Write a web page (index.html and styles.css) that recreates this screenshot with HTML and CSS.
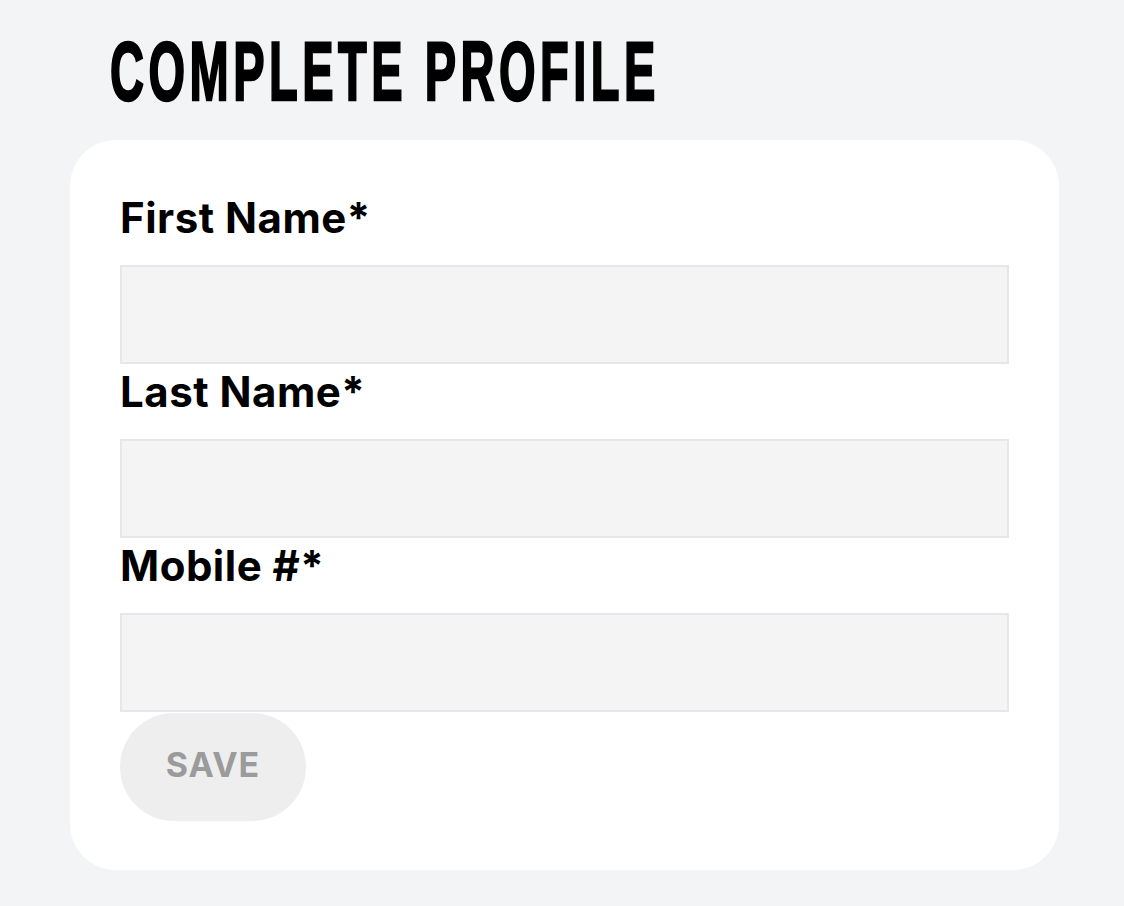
FILE: index.html
```html
<!DOCTYPE html>
<html lang="en">
<head>
    <meta charset="UTF-8">
    <title>Complete Profile</title>
    <link rel="stylesheet" href="styles.css">
</head>
<body>

    <div class="page">
        <!-- 标题 -->
        <h1 class="page-title">COMPLETE PROFILE</h1>

        <!-- 资料表单 -->
        <form class="profile-card" onsubmit="return false">
            <label class="field-label" for="first_name">First Name*</label>
            <input class="field-input" type="text" id="first_name" name="first_name">

            <label class="field-label" for="last_name">Last Name*</label>
            <input class="field-input" type="text" id="last_name" name="last_name">

            <label class="field-label" for="mobile">Mobile #*</label>
            <input class="field-input" type="tel" id="mobile" name="mobile">

            <button class="save-btn" type="submit" disabled>SAVE</button>
        </form>
    </div>

</body>
</html>
```

FILE: styles.css
```css
body {
    margin: 0;
    padding: 0;
    background-color: #f3f4f6;
    font-family: Inter, "Liberation Sans", sans-serif;
    color: #000;
}

.page {
    width: 989px;
    margin-left: 70px;
    padding-top: 29px;
}

.page-title {
    margin: 0 0 27px 40px;
    font-family: "Liberation Sans", sans-serif;
    font-size: 84px;
    line-height: 84px;
    font-weight: 700;
    letter-spacing: 8px;
    -webkit-text-stroke: 2.5px #000;
    transform: scaleX(0.56);
    transform-origin: left center;
    white-space: nowrap;
}

.profile-card {
    display: flex;
    flex-direction: column;
    align-items: flex-start;
    background-color: #ffffff;
    border-radius: 46px;
    padding: 53px 50px 49px;
}

.field-label {
    font-size: 42px;
    line-height: 50px;
    font-weight: 700;
    letter-spacing: 0.5px;
    margin: 3px 0 22px;
}

.field-label:first-child {
    margin-top: 0;
}

.field-input {
    box-sizing: border-box;
    width: 100%;
    height: 99px;
    margin: 0;
    border: 2px solid #e7e7eb;
    background-color: #f4f4f4;
    border-radius: 0;
    outline: none;
}

.save-btn {
    margin-top: 1px;
    width: 186px;
    height: 108px;
    padding-bottom: 6px;
    border: none;
    border-radius: 54px;
    background-color: #eeeeee;
    color: #9b9b9b;
    font-family: Inter, "Liberation Sans", sans-serif;
    font-size: 34px;
    font-weight: 700;
    letter-spacing: 1px;
}
```
